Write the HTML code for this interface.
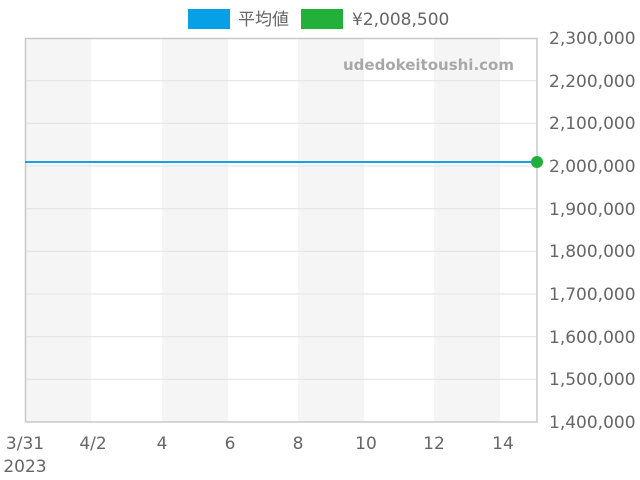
<!DOCTYPE html>
<html><head><meta charset="utf-8"><style>
html,body{margin:0;padding:0;background:#fff;width:640px;height:480px;overflow:hidden}
text{font-family:"DejaVu Sans","Liberation Sans","Noto Sans CJK JP",sans-serif;}
</style></head><body>
<svg width="640" height="480" viewBox="0 0 640 480" xmlns="http://www.w3.org/2000/svg">
<rect x="25" y="38" width="66" height="384" fill="#f5f5f5"/>
<rect x="162" y="38" width="66" height="384" fill="#f5f5f5"/>
<rect x="298" y="38" width="66" height="384" fill="#f5f5f5"/>
<rect x="434" y="38" width="66" height="384" fill="#f5f5f5"/>
<g stroke="#e2e2e2" stroke-width="1">
<line x1="25" x2="537" y1="80.7" y2="80.7"/>
<line x1="25" x2="537" y1="123.3" y2="123.3"/>
<line x1="25" x2="537" y1="166" y2="166"/>
<line x1="25" x2="537" y1="208.7" y2="208.7"/>
<line x1="25" x2="537" y1="251.3" y2="251.3"/>
<line x1="25" x2="537" y1="294" y2="294"/>
<line x1="25" x2="537" y1="336.7" y2="336.7"/>
<line x1="25" x2="537" y1="379.3" y2="379.3"/>
</g>
<rect x="25.5" y="38.5" width="511.5" height="383.5" fill="none" stroke="#c8c8c8" stroke-width="1.5"/>
<line x1="25" x2="537" y1="162" y2="162" stroke="#1a9fe6" stroke-width="2"/>
<circle cx="537" cy="162" r="6" fill="#22b03a"/>
<text x="514" y="70" text-anchor="end" font-size="15" font-weight="bold" fill="#a8a8a8" textLength="171">udedokeitoushi.com</text>
<rect x="188" y="9" width="42" height="20" fill="#079fe6"/>
<text x="238" y="25" font-size="17" fill="#666">平均値</text>
<rect x="301" y="9" width="42" height="20" fill="#22b03a"/>
<text x="352" y="25" font-size="17" fill="#666">¥2,008,500</text>
<g font-size="17" fill="#666">
<text x="549" y="44">2,300,000</text>
<text x="549" y="87">2,200,000</text>
<text x="549" y="129">2,100,000</text>
<text x="549" y="172">2,000,000</text>
<text x="549" y="215">1,900,000</text>
<text x="549" y="257">1,800,000</text>
<text x="549" y="300">1,700,000</text>
<text x="549" y="343">1,600,000</text>
<text x="549" y="385">1,500,000</text>
<text x="549" y="428">1,400,000</text>
</g>
<g font-size="17" fill="#666" text-anchor="middle">
<text x="25" y="449">3/31</text>
<text x="25" y="472">2023</text>
<text x="93" y="449">4/2</text>
<text x="162" y="449">4</text>
<text x="230" y="449">6</text>
<text x="298" y="449">8</text>
<text x="366" y="449">10</text>
<text x="434" y="449">12</text>
<text x="503" y="449">14</text>
</g>
</svg>
</body></html>
